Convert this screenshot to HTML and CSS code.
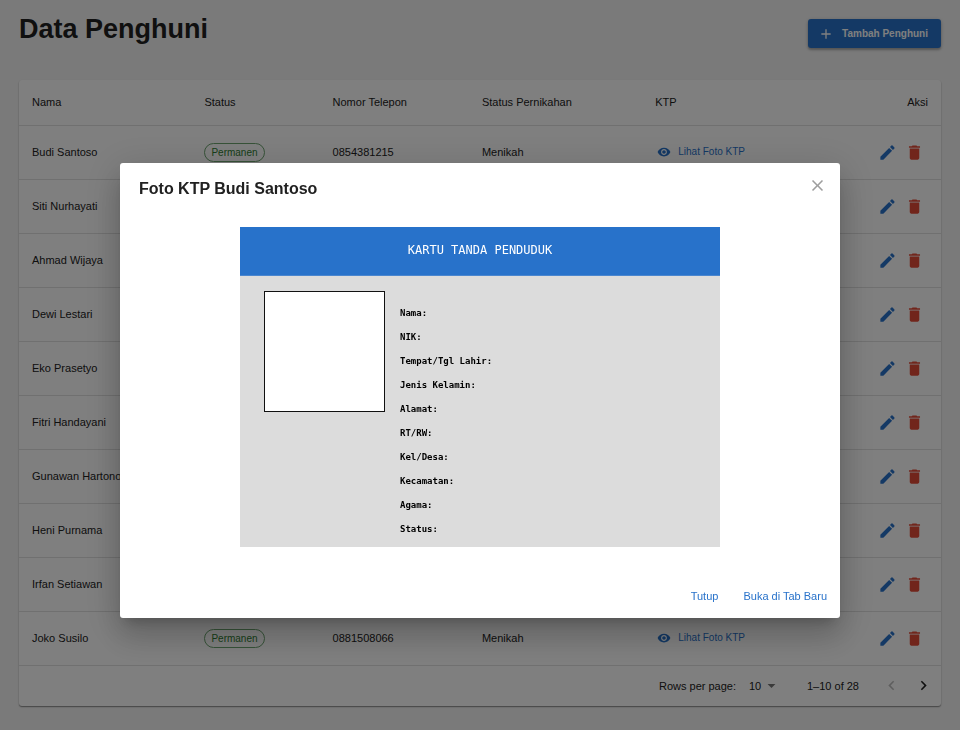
FILE: index.html
```html
<!DOCTYPE html>
<html lang="id">
<head>
<meta charset="utf-8">
<meta name="viewport" content="width=device-width, initial-scale=1">
<title>Data Penghuni</title>
<link rel="stylesheet" href="styles.css">
</head>
<body>
<svg class="sprite" aria-hidden="true">
  <symbol id="i-add" viewBox="0 0 24 24"><path d="M19 13h-6v6h-2v-6H5v-2h6V5h2v6h6z"/></symbol>
  <symbol id="i-eye" viewBox="0 0 24 24"><path d="M12 4.5C7 4.5 2.73 7.61 1 12c1.730 4.390 6 7.500 11 7.500s9.270-3.110 11-7.500c-1.730-4.390-6-7.500-11-7.500M12 17c-2.760 0-5-2.240-5-5s2.240-5 5-5 5 2.240 5 5-2.240 5-5 5m0-8c-1.660 0-3 1.340-3 3s1.340 3 3 3 3-1.340 3-3-1.340-3-3-3"/></symbol>
  <symbol id="i-edit" viewBox="0 0 24 24"><path d="M3 17.250V21h3.750L17.810 9.940l-3.750-3.750zM20.710 7.040c.39-.39.39-1.020 0-1.410l-2.340-2.340a.996.996 0 0 0-1.410 0l-1.830 1.830 3.750 3.750z"/></symbol>
  <symbol id="i-delete" viewBox="0 0 24 24"><path d="M6 19c0 1.100.9 2 2 2h8c1.100 0 2-.9 2-2V7H6zM19 4h-3.500l-1-1h-5l-1 1H5v2h14z"/></symbol>
  <symbol id="i-close" viewBox="0 0 24 24"><path d="M19 6.410 17.590 5 12 10.590 6.410 5 5 6.410 10.590 12 5 17.590 6.410 19 12 13.410 17.590 19 19 17.590 13.410 12z"/></symbol>
  <symbol id="i-down" viewBox="0 0 24 24"><path d="m7 10 5 5 5-5z"/></symbol>
  <symbol id="i-left" viewBox="0 0 24 24"><path d="M15.410 16.590 10.830 12l4.580-4.590L14 6l-6 6 6 6z"/></symbol>
  <symbol id="i-right" viewBox="0 0 24 24"><path d="M8.590 16.590 13.170 12 8.590 7.410 10 6l6 6-6 6z"/></symbol>
</svg>

<main class="page">
  <header class="page-head">
    <h1>Data Penghuni</h1>
    <button class="add-btn" type="button"><svg class="icon-s"><use href="#i-add"/></svg>Tambah Penghuni</button>
  </header>

  <section class="paper">
    <table class="residents">
      <colgroup><col class="c-name"><col class="c-status"><col class="c-phone"><col class="c-marital"><col class="c-ktp"><col class="c-action"></colgroup>
      <thead>
        <tr><th>Nama</th><th>Status</th><th>Nomor Telepon</th><th>Status Pernikahan</th><th>KTP</th><th class="right">Aksi</th></tr>
      </thead>
      <tbody id="rows"></tbody>
    </table>
    <footer class="pager">
      <label for="per-page">Rows per page:</label>
      <span class="select">
        <select id="per-page"><option>10</option></select>
        <svg class="icon-m"><use href="#i-down"/></svg>
      </span>
      <span class="range">1–10 of 28</span>
      <button class="nav-btn" type="button" disabled aria-label="Previous page"><svg class="icon-m"><use href="#i-left"/></svg></button>
      <button class="nav-btn" type="button" aria-label="Next page"><svg class="icon-m"><use href="#i-right"/></svg></button>
    </footer>
  </section>
</main>

<div class="backdrop">
  <div class="dialog" role="dialog" aria-modal="true" aria-labelledby="dialog-title">
    <header class="dialog-head">
      <h2 id="dialog-title">Foto KTP Budi Santoso</h2>
      <button class="close-btn" type="button" aria-label="Close"><svg class="icon-m"><use href="#i-close"/></svg></button>
    </header>
    <div class="dialog-body">
      <div class="ktp">
        <div class="ktp-head">KARTU TANDA PENDUDUK</div>
        <div class="ktp-main">
          <div class="ktp-photo"></div>
          <ul class="ktp-fields">
            <li>Nama:</li>
            <li>NIK:</li>
            <li>Tempat/Tgl Lahir:</li>
            <li>Jenis Kelamin:</li>
            <li>Alamat:</li>
            <li>RT/RW:</li>
            <li>Kel/Desa:</li>
            <li>Kecamatan:</li>
            <li>Agama:</li>
            <li>Status:</li>
          </ul>
        </div>
      </div>
    </div>
    <footer class="dialog-actions">
      <button class="text-btn" type="button">Tutup</button>
      <a class="text-btn" href="#ktp">Buka di Tab Baru</a>
    </footer>
  </div>
</div>
<script src="app.js"></script>
</body>
</html>
```
FILE: styles.css
```css
* { box-sizing: border-box; }

:root {
  --primary: #2872ca;
  --danger: #e34b37;
  --text: #212121;
  --line: #e0e0e0;
}

body {
  margin: 0;
  min-height: 100vh;
  background: #f5f5f5;
  color: var(--text);
  font: 11px/16px "Liberation Sans", Arial, sans-serif;
}

button, select { font: inherit; color: inherit; border: 0; background: none; margin: 0; padding: 0; }
button { cursor: pointer; }
a { text-decoration: none; }
h1, h2, ul { margin: 0; padding: 0; list-style: none; }
svg { fill: currentColor; flex: none; display: block; }

.sprite { position: absolute; width: 0; height: 0; }
.icon-xs { width: 14px; height: 14px; }
.icon-s { width: 16px; height: 16px; }
.icon-m { width: 19px; height: 19px; }

.page { padding: 19px; }
.page-head {
  display: flex;
  justify-content: space-between;
  align-items: flex-start;
  height: 61px;
}
h1 { font-size: 27px; line-height: 20px; font-weight: 700; }
.add-btn {
  display: flex;
  align-items: center;
  gap: 8px;
  height: 29px;
  padding: 0 13px 0 10px;
  border-radius: 3px;
  background: var(--primary);
  color: #fff;
  font-size: 10px;
  font-weight: 700;
  box-shadow: 0 2px 2px rgba(0, 0, 0, .2), 0 1px 4px rgba(0, 0, 0, .2);
}

.paper {
  background: #fff;
  border-radius: 3px;
  box-shadow: 0 1px 1px rgba(0, 0, 0, .3), 0 1px 2px rgba(0, 0, 0, .2);
}
.residents { width: 100%; border-collapse: collapse; table-layout: fixed; }
.c-name { width: 18.7%; }
.c-status { width: 13.9%; }
.c-phone { width: 16.2%; }
.c-marital { width: 18.8%; }
.c-action { width: 12%; }
th, td {
  padding: 0 13px;
  text-align: left;
  font-weight: 400;
  border-bottom: 1px solid var(--line);
  white-space: nowrap;
}
th { height: 45px; }
td { height: 54px; }
.right { text-align: right; }

.chip {
  display: inline-block;
  padding: 0 6px;
  border: 1px solid #6da570;
  border-radius: 10px;
  color: #2e7d32;
  font-size: 10px;
  line-height: 17px;
}
.view-btn {
  display: flex;
  align-items: center;
  gap: 7px;
  padding-left: 2px;
  color: var(--primary);
  font-size: 10px;
}
.actions { display: flex; justify-content: flex-end; }
.icon-btn { width: 27px; height: 27px; display: grid; place-items: center; }
.edit { color: var(--primary); }
.delete { color: var(--danger); }

.pager {
  display: flex;
  align-items: center;
  justify-content: flex-end;
  height: 40px;
  padding-right: 2px;
}
.select { position: relative; display: flex; align-items: center; margin: 0 26px 0 13px; }
.select select { appearance: none; width: 32px; line-height: 16px; }
.select svg { position: absolute; right: 0; color: #757575; pointer-events: none; }
.range { margin-right: 16px; }
.nav-btn { width: 32px; height: 32px; display: grid; place-items: center; }
.nav-btn:disabled { color: #bdbdbd; }

.backdrop {
  position: fixed;
  inset: 0;
  display: flex;
  justify-content: center;
  align-items: center;
  padding: 51px 26px 0;
  background: rgba(0, 0, 0, .5);
}
.dialog {
  width: 100%;
  max-width: 720px;
  background: #fff;
  border-radius: 3px;
  box-shadow: 0 9px 12px -6px rgba(0, 0, 0, .2), 0 19px 30px 2px rgba(0, 0, 0, .14), 0 7px 37px 6px rgba(0, 0, 0, .12);
}
.dialog-head {
  display: flex;
  justify-content: space-between;
  align-items: flex-start;
  padding: 13px 13px 11px 19px;
}
h2 { font-size: 16px; line-height: 26px; font-weight: 700; }
.close-btn { color: #9e9e9e; }
.dialog-body { display: flex; justify-content: center; padding: 14px 19px 19px; }
.dialog-actions {
  display: flex;
  justify-content: flex-end;
  gap: 13px;
  padding: 14px 7px 7px;
}
.text-btn { color: var(--primary); line-height: 16px; padding: 8px 6px 7px; }

.ktp {
  width: 100%;
  max-width: 480px;
  background: #dcdcdc;
  color: #000;
  font-family: "DejaVu Sans Mono", monospace;
}
.ktp-head {
  height: 49px;
  border-bottom: 1px solid #4a86cf;
  background: var(--primary);
  color: #fff;
  font-size: 12px;
  line-height: 46px;
  text-align: center;
}
.ktp-main { display: flex; gap: 15px; padding: 15px 24px 6px; }
.ktp-photo { width: 121px; height: 121px; background: #fff; border: 1px solid #111; }
.ktp-fields { padding-top: 10px; font-size: 9px; line-height: 24px; font-weight: 700; }
```
FILE: app.js
```js
const residents = [
  { name: "Budi Santoso", status: "Permanen", phone: "0854381215", marital: "Menikah" },
  { name: "Siti Nurhayati" },
  { name: "Ahmad Wijaya" },
  { name: "Dewi Lestari" },
  { name: "Eko Prasetyo" },
  { name: "Fitri Handayani" },
  { name: "Gunawan Hartono" },
  { name: "Heni Purnama" },
  { name: "Irfan Setiawan" },
  { name: "Joko Susilo", status: "Permanen", phone: "0881508066", marital: "Menikah" }
];

const icon = (id, size) => `<svg class="${size}"><use href="#${id}"/></svg>`;

document.getElementById("rows").innerHTML = residents.map(r => `
  <tr>
    <td>${r.name}</td>
    <td>${r.status ? `<span class="chip">${r.status}</span>` : ""}</td>
    <td>${r.phone || ""}</td>
    <td>${r.marital || ""}</td>
    <td>${r.status ? `<button class="view-btn" type="button">${icon("i-eye", "icon-xs")}Lihat Foto KTP</button>` : ""}</td>
    <td><div class="actions">
      <button class="icon-btn edit" type="button" aria-label="Edit ${r.name}">${icon("i-edit", "icon-m")}</button>
      <button class="icon-btn delete" type="button" aria-label="Hapus ${r.name}">${icon("i-delete", "icon-m")}</button>
    </div></td>
  </tr>`).join("");
```
